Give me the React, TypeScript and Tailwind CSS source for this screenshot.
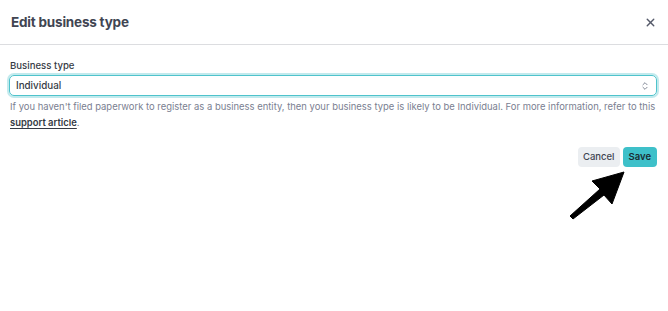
import { X, ChevronsUpDown } from "lucide-react";

const App = () => {
  return (
    <div className="relative w-[668px] h-[311px] bg-white font-['Inter',sans-serif] overflow-hidden">
      <div className="h-[45px] px-[10px] flex items-center justify-between border-b border-[#dcdde0]">
        <h1 className="text-[13.5px] font-bold text-[#414552] tracking-[-0.2px] pl-[1px]">Edit business type</h1>
        <button className="mr-[1px] text-[#545969]">
          <X size={13} strokeWidth={2.5} />
        </button>
      </div>

      <div className="px-[9px] pt-[14px]">
        <label className="block text-[9.6px] leading-[14px] font-medium text-[#353a44] pl-[1px]">
          Business type
        </label>
        <div className="mt-[2px] h-[21px] w-[648px] rounded-[5px] border border-[#4fc3cc] shadow-[0_0_0_2px_rgba(79,195,204,0.35)] flex items-center justify-between px-[6px] pt-[1px]">
          <span className="text-[9.8px] font-medium text-[#353a44]">Individual</span>
          <ChevronsUpDown size={10} strokeWidth={2} className="text-[#6c7383]" />
        </div>
        <p className="mt-[3px] pl-[1px] text-[9.45px] leading-[16px] text-[#7a8091]">
          <span className="whitespace-nowrap">
            If you haven't filed paperwork to register as a business entity, then your business type is likely to be Individual. For more information, refer to this
          </span>
          <br />
          <a className="font-semibold text-[#353a44] underline underline-offset-2">support article</a>.
        </p>

        <div className="mt-[16px] flex justify-end gap-[3px] pr-[2px]">
          <button className="h-[20px] px-[5px] rounded-[4px] bg-[#ebeef1] text-[9.5px] font-medium text-[#414552]">
            Cancel
          </button>
          <button className="h-[20px] px-[6px] rounded-[4px] bg-[#3ec0c9] text-[9.5px] font-semibold text-[#1a2c33]">
            Save
          </button>
        </div>
      </div>

      <svg className="absolute left-0 top-0 pointer-events-none" width="668" height="311">
        <polygon
          points="624,172 592,181 600,189 570,216 573,219 604,195 612,204"
          fill="#000"
          stroke="#000"
          strokeWidth="1"
          strokeLinejoin="round"
        />
      </svg>
    </div>
  );
};

export default App;
